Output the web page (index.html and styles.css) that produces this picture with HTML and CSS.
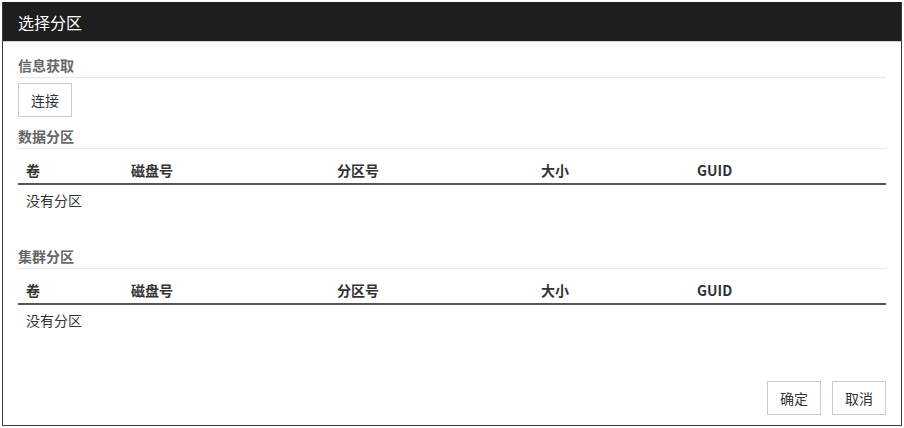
FILE: index.html
```html
<!DOCTYPE html>
<html lang="zh-CN">
<head>
<meta charset="utf-8">
<title>选择分区</title>
<link rel="stylesheet" href="styles.css">
</head>
<body>
<div class="dialog">
  <div class="dialog-header">选择分区</div>
  <div class="dialog-body">
    <div class="section-title first">信息获取</div>
    <div class="row-actions"><button class="btn">连接</button></div>

    <div class="section-title">数据分区</div>
    <table class="grid">
      <thead>
        <tr><th class="c1">卷</th><th class="c2">磁盘号</th><th class="c3">分区号</th><th class="c4">大小</th><th class="c5">GUID</th></tr>
      </thead>
      <tbody>
        <tr><td colspan="5">没有分区</td></tr>
      </tbody>
    </table>

    <div class="section-title gap">集群分区</div>
    <table class="grid">
      <thead>
        <tr><th class="c1">卷</th><th class="c2">磁盘号</th><th class="c3">分区号</th><th class="c4">大小</th><th class="c5">GUID</th></tr>
      </thead>
      <tbody>
        <tr><td colspan="5">没有分区</td></tr>
      </tbody>
    </table>

    <div class="dialog-footer">
      <button class="btn">确定</button>
      <button class="btn">取消</button>
    </div>
  </div>
</div>
</body>
</html>
```
FILE: styles.css
```css
html, body {
  margin: 0;
  padding: 0;
  background: #ffffff;
}
body {
  font-family: "Noto Sans CJK SC", "Liberation Sans", sans-serif;
  font-size: 14px;
  color: #333333;
}
.dialog {
  margin: 2px;
  width: 900px;
  height: 424px;
  box-sizing: border-box;
  border: 1px solid #3a3a3a;
  border-top: none;
  display: flex;
  flex-direction: column;
  background: #fff;
}
.dialog-header {
  height: 40px;
  background: #1e1e1e;
  color: #ffffff;
  font-size: 16px;
  line-height: 40px;
  padding-left: 15px;
  border-bottom: 1px solid #d0d0d0;
  box-sizing: border-box;
}
.dialog-body {
  flex: 1;
  display: flex;
  flex-direction: column;
  padding: 0 15px 10px 15px;
}
.section-title {
  font-weight: bold;
  color: #666666;
  line-height: 20px;
  padding-bottom: 2px;
  border-bottom: 1px solid #e6e6e6;
  margin-top: 9px;
}
.section-title.first {
  margin-top: 13px;
}
.section-title.gap {
  margin-top: 30px;
}
.row-actions {
  margin-top: 5px;
}
.btn {
  font-family: inherit;
  font-size: 14px;
  color: #333333;
  background: #ffffff;
  border: 1px solid #cccccc;
  height: 34px;
  padding: 0 12px;
  line-height: 20px;
  cursor: pointer;
}
.grid {
  width: 100%;
  border-collapse: collapse;
  margin-top: 8px;
  table-layout: fixed;
}
.grid th {
  text-align: left;
  font-weight: bold;
  color: #333333;
  line-height: 20px;
  padding: 3px 8px;
  border-bottom: 2px solid #555555;
}
.grid td {
  line-height: 20px;
  padding: 5px 8px 6px 8px;
}
.c1 { width: 89px; }
.c2 { width: 190px; }
.c3 { width: 188px; }
.c4 { width: 140px; }
.dialog-footer {
  margin-top: auto;
  display: flex;
  justify-content: flex-end;
  gap: 11px;
}
```
